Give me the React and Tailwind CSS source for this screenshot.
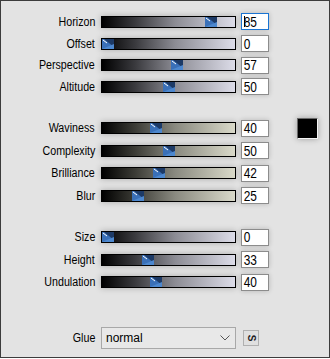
import React from "react";

function Thumb({ left }) {
  return (
    <svg
      className="absolute top-0"
      style={{ left }}
      width="12"
      height="10"
      viewBox="0 0 12 10"
    >
      <rect x="0" y="0" width="12" height="10" fill="#3a70b8" />
      <polygon points="2,0 12,0 12,8" fill="#1d3a66" />
      <polygon points="0,10 12,10 12,5" fill="#4d88cf" />
      <line x1="1" y1="1" x2="5" y2="4" stroke="#ffffff" strokeWidth="1" />
    </svg>
  );
}

function SliderRow({ label, value, theme, focused, extra, h }) {
  const grad =
    theme === "warm"
      ? "bg-[linear-gradient(to_right,#000000_0%,#3c3c36_25%,#8a8a80_55%,#d9d9c9_100%)]"
      : "bg-[linear-gradient(to_right,#000000_0%,#3a3a3e_25%,#8c8c94_55%,#dcdce8_100%)]";
  const left = Math.round((value / 100) * 121);
  return (
    <div className={`flex items-center ${h}`}>
      <div className="w-[95px] flex justify-end pr-[1px]">
        <span className="inline-block origin-right scale-x-[0.89] text-[12px] leading-none text-black whitespace-nowrap">
          {label}
        </span>
      </div>
      <div className="ml-[5px] w-[135px] h-[12px] border border-black shadow-[0_0_6px_rgba(0,0,0,0.25)] relative">
        <div className={`absolute inset-0 ${grad}`} />
        <Thumb left={left} />
      </div>
      <div
        className={`ml-[5px] w-[28px] h-[17px] bg-white flex items-center relative shadow-[0_0_5px_rgba(0,0,0,0.2)] border ${
          focused ? "border-[#1a74d2]" : "border-[#8c8c8c]"
        }`}
      >
        {focused && <div className="absolute left-[2px] top-[2px] w-px h-[11px] bg-black" />}
        <span className="pl-[2px] inline-block origin-left scale-x-[0.85] text-[14px] leading-none text-black">
          {value}
        </span>
      </div>
      {extra}
    </div>
  );
}

export default function App() {
  return (
    <div
      className="w-[330px] h-[358px] bg-[#e3e3e3] border border-[#3c3c3c] flex flex-col"
      style={{ fontFamily: '"Liberation Sans", Arial, sans-serif' }}
    >
      <div className="mt-[10px] flex flex-col">
        <SliderRow label="Horizon" value={85} focused h="h-[21.7px]" />
        <SliderRow label="Offset" value={0} h="h-[21.7px]" />
        <SliderRow label="Perspective" value={57} h="h-[21.7px]" />
        <SliderRow label="Altitude" value={50} h="h-[21.7px]" />
      </div>
      <div className="mt-[19px] flex flex-col">
        <SliderRow
          label="Waviness"
          value={40}
          theme="warm"
          h="h-[22.6px]"
          extra={
            <div className="ml-[28px] w-[21px] h-[21px] bg-black border border-t-[#6a6a6a] border-l-[#6a6a6a] border-r-[#f4f4f4] border-b-[#f4f4f4] shadow-[0_0_6px_rgba(0,0,0,0.3)]" />
          }
        />
        <SliderRow label="Complexity" value={50} theme="warm" h="h-[22.6px]" />
        <SliderRow label="Brilliance" value={42} theme="warm" h="h-[22.6px]" />
        <SliderRow label="Blur" value={25} theme="warm" h="h-[22.6px]" />
      </div>
      <div className="mt-[19px] flex flex-col">
        <SliderRow label="Size" value={0} h="h-[22.5px]" />
        <SliderRow label="Height" value={33} h="h-[22.5px]" />
        <SliderRow label="Undulation" value={40} h="h-[22.5px]" />
      </div>
      <div className="mt-[33px] flex items-center h-[22px]">
        <div className="w-[95px] flex justify-end pr-[1px]">
          <span className="inline-block origin-right scale-x-[0.89] text-[12px] leading-none text-black">
            Glue
          </span>
        </div>
        <div className="ml-[5px] w-[135px] h-[22px] bg-[#e8e8e8] border border-[#a8a8a8] flex items-center justify-between pl-[4px] pr-[5px]">
          <span className="text-[12px] leading-none text-black">normal</span>
          <svg width="10" height="6" viewBox="0 0 10 6">
            <polyline points="0.5,0.5 5,5 9.5,0.5" fill="none" stroke="#555" strokeWidth="1" />
          </svg>
        </div>
        <div className="ml-[7px] w-[16px] h-[16px] bg-[#e0e0e0] border border-[#b0b0b0] flex items-center justify-center">
          <span className="inline-block rotate-90 text-[10px] font-bold leading-none text-[#222]">S</span>
        </div>
      </div>
    </div>
  );
}
